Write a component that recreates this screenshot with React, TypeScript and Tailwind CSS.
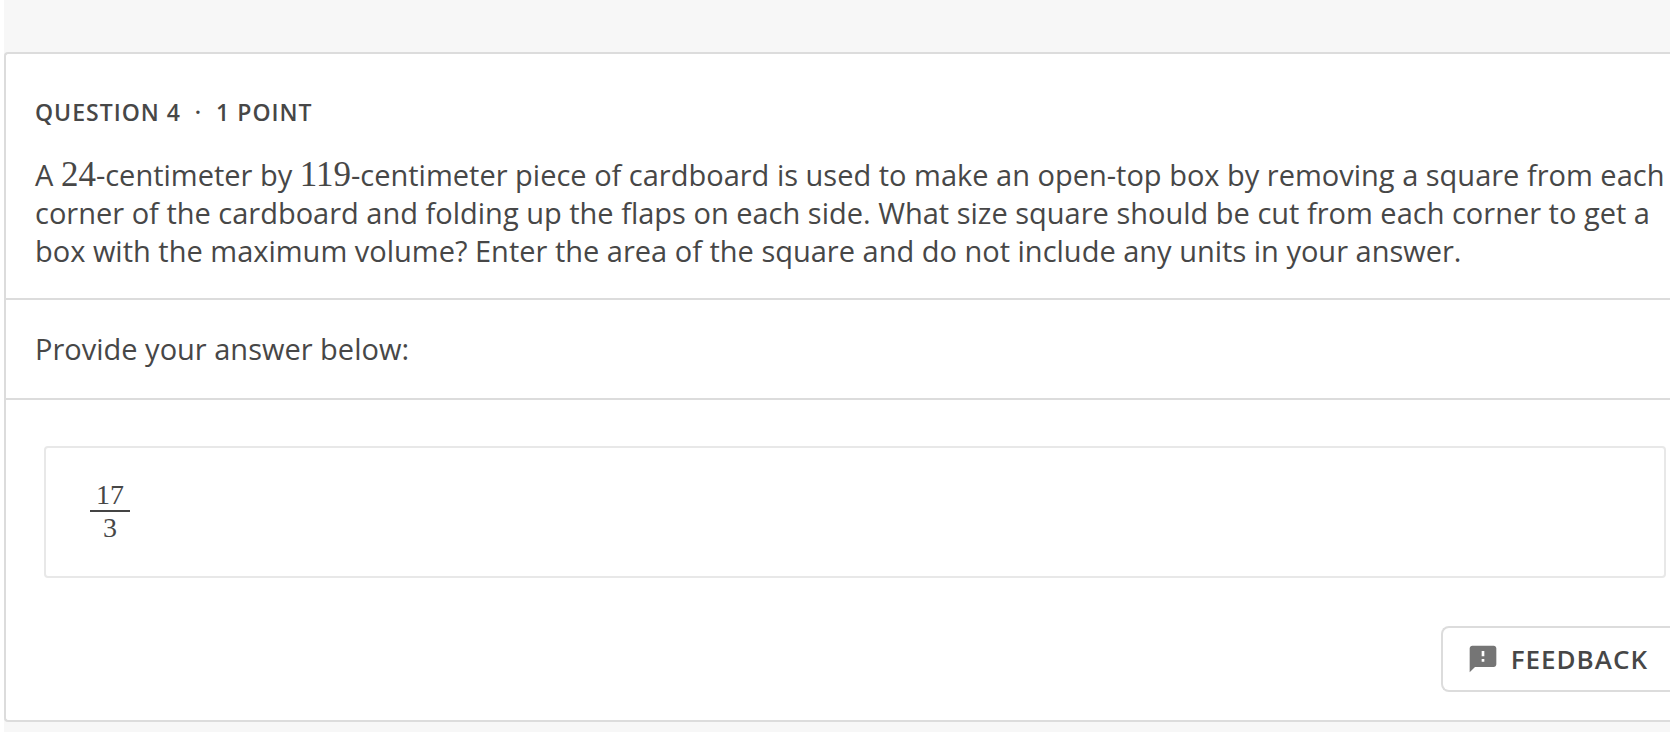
import { MdFeedback } from "react-icons/md";

const MathNumber = ({ value }: { value: number }) => (
  <span className="font-['Liberation_Serif',serif] text-[35px] leading-none">{value}</span>
);

const QuestionPrompt = () => (
  <section className="border-b-2 border-[#dcdcdc] pt-[42px] pb-7 pl-[29px]">
    <h2 className="mb-7 text-[23px] leading-8 font-semibold tracking-[1px]">
      QUESTION 4 &nbsp;·&nbsp; 1 POINT
    </h2>
    <p>
      A <MathNumber value={24} />-centimeter by <MathNumber value={119} />-centimeter piece of
      cardboard is used to make an open-top box by removing a square from each corner of the
      cardboard and folding up the flaps on each side. What size square should be cut from each
      corner to get a box with the maximum volume? Enter the area of the square and do not include
      any units in your answer.
    </p>
  </section>
);

const FractionInput = () => (
  <div
    role="group"
    aria-labelledby="answer-label"
    className="rounded border-2 border-[#e8e8e8] px-11 py-8 font-['Liberation_Serif',serif] text-[28px] leading-8"
  >
    <div className="flex w-10 flex-col">
      <input
        aria-label="Numerator"
        defaultValue="17"
        className="h-8 w-full border-b-2 border-[#444] text-center outline-none"
      />
      <input
        aria-label="Denominator"
        defaultValue="3"
        className="h-8 w-full text-center outline-none"
      />
    </div>
  </div>
);

const App = () => {
  return (
    <main className="ml-1 min-h-screen overflow-hidden bg-[#f7f7f7] pt-[52px] font-['Open_Sans',sans-serif] text-[29px] leading-[38px] text-[#474747]">
      <div className="rounded-l border-y-2 border-l-2 border-[#dcdcdc] bg-white">
        <QuestionPrompt />
        <p id="answer-label" className="border-b-2 border-[#dcdcdc] px-[29px] py-[30px]">
          Provide your answer below:
        </p>
        <div className="pt-[46px] pr-1 pl-[38px]">
          <FractionInput />
        </div>
        <div className="flex justify-end pt-12 pb-7">
          <button
            type="button"
            className="flex h-[66px] items-center gap-3 rounded-l-lg border-y-2 border-l-2 border-[#dcdcdc] pr-[22px] pl-6 text-[26px] font-semibold tracking-[1px]"
          >
            <MdFeedback className="size-8 text-[#757575]" />
            FEEDBACK
          </button>
        </div>
      </div>
    </main>
  );
};

export default App;
